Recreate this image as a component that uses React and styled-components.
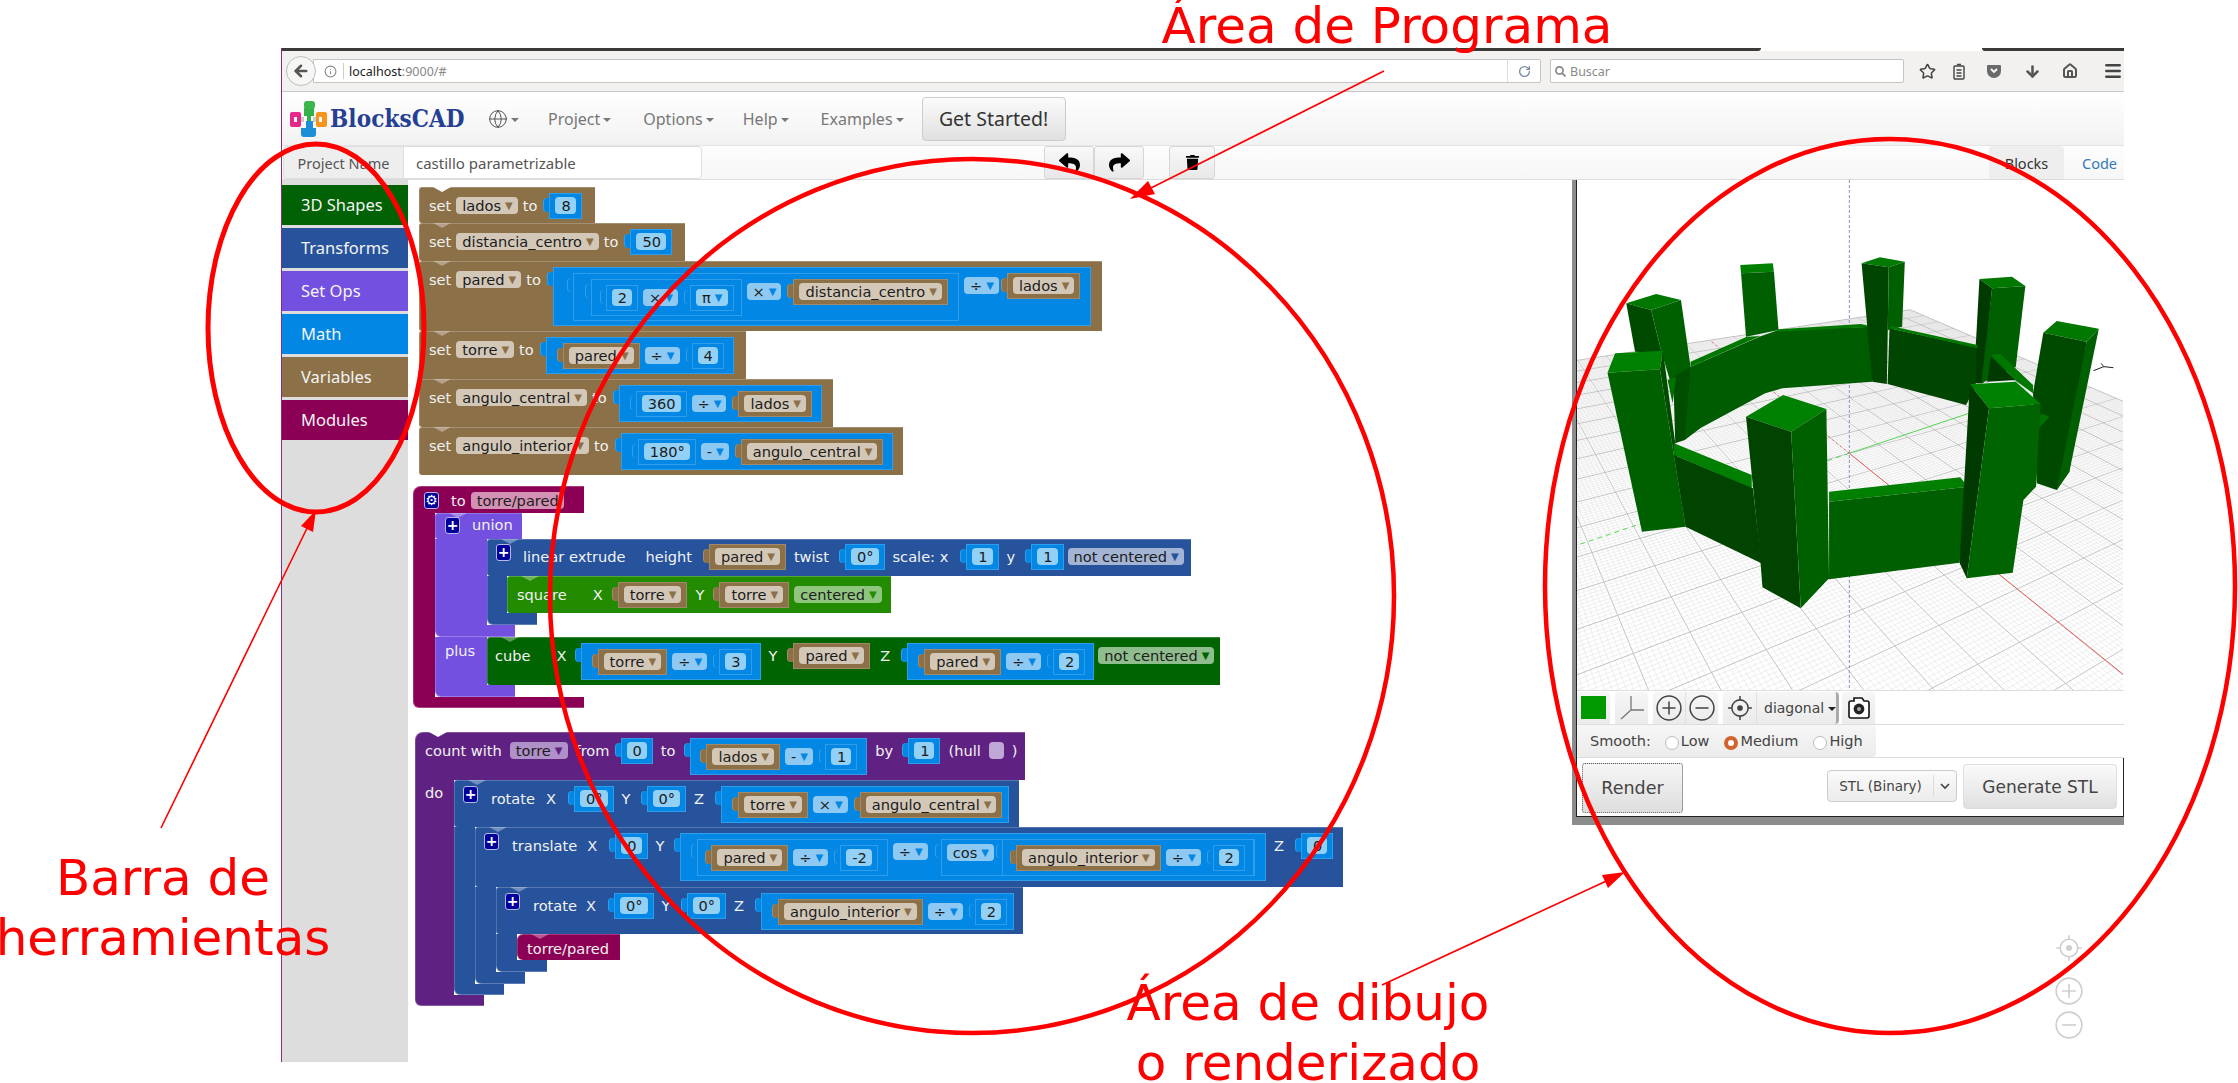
import React from "react";
import styled, { createGlobalStyle } from "styled-components";
import { FaReply, FaShare, FaTrash, FaSearch } from "react-icons/fa";
import { Globe, Star, ArrowDown, Home, Menu, RotateCw, Info, ArrowLeft } from "lucide-react";

const BROWN = "#8b7048";
const MATH = "#0288e4";
const BLUE = "#26539c";
const LILAC = "#7450e0";
const WINE = "#8b0054";
const PURPLE = "#602282";
const LIME = "#228b00";
const DARK_GREEN = "#006400";

const GlobalStyle = createGlobalStyle`
  html, body { margin: 0; padding: 0; background: #fff; }
  body { font-family: "Noto Sans", sans-serif; }
`;

const Page = styled.div`
  position: relative;
  width: 2238px;
  height: 1083px;
  overflow: hidden;
  background: #fff;
  padding: 48px 0 0 281px;
  box-sizing: border-box;
`;

const Win = styled.div`
  width: 1843px;
  height: 1014px;
  display: flex;
  flex-direction: column;
  border-left: 1px solid #8a2a80;
  box-sizing: border-box;
`;

const TitleBar = styled.div`
  display: flex;
  justify-content: space-between;
  height: 3px;
  flex: none;
`;

const TitleSeg = styled.div`
  width: ${(p) => p.$w}px;
  background: #3a3a38;
  border-radius: ${(p) => p.$r};
`;

const Chrome = styled.div`
  flex: none;
  height: 40px;
  background: #f2f1ef;
  border-bottom: 1px solid #c8c8c8;
  display: flex;
  align-items: center;
  box-sizing: content-box;
  position: relative;
  padding-left: 4px;
`;

const BackBtn = styled.div`
  width: 30px;
  height: 30px;
  border-radius: 50%;
  border: 1px solid #bdbdbd;
  background: #f6f6f5;
  display: flex;
  align-items: center;
  justify-content: center;
  box-sizing: border-box;
  flex: none;
  color: #555;
  z-index: 1;
`;

const UrlBar = styled.div`
  width: 1228px;
  height: 24px;
  margin-left: -3px;
  background: #fff;
  border: 1px solid #c4c4c4;
  border-radius: 0 2px 2px 0;
  box-sizing: border-box;
  display: flex;
  align-items: center;
  padding-left: 10px;
  font-size: 12.5px;
  color: #222;
  flex: none;
`;

const UrlDim = styled.span`
  color: #888;
`;

const UrlSep = styled.span`
  width: 1px;
  height: 16px;
  background: #ccc;
  margin: 0 5px 0 6px;
`;

const ReloadSlot = styled.div`
  margin-left: auto;
  height: 22px;
  width: 32px;
  border-left: 1px solid #ddd;
  display: flex;
  align-items: center;
  justify-content: center;
  color: #7a8aa0;
`;

const SearchBox = styled.div`
  width: 354px;
  height: 24px;
  margin-left: 9px;
  background: #fff;
  border: 1px solid #c4c4c4;
  border-radius: 2px;
  box-sizing: border-box;
  display: flex;
  align-items: center;
  gap: 4px;
  padding-left: 4px;
  font-size: 12.5px;
  color: #8a8a8a;
  flex: none;
`;

const ChromeIcons = styled.div`
  display: flex;
  align-items: center;
  margin-left: 8px;
  color: #444;
  gap: 0;
`;

const ChromeIcon = styled.div`
  width: ${(p) => p.$w || 38}px;
  display: flex;
  justify-content: center;
`;

const Nav = styled.div`
  flex: none;
  height: 53px;
  background: linear-gradient(#ffffff, #f2f2f2);
  border-bottom: 1px solid #e4e4e4;
  display: flex;
  align-items: center;
  padding-left: 8px;
`;

const Brand = styled.div`
  font-family: "DejaVu Serif", serif;
  font-weight: 700;
  font-stretch: condensed;
  font-size: 24px;
  letter-spacing: 0.1px;
  color: #243f94;
  margin-left: 3px;
  width: 158px;
`;

const NavItem = styled.div`
  font-size: 16px;
  color: #777;
  margin-left: ${(p) => p.$ml}px;
  display: flex;
  align-items: center;
  gap: 3px;
`;

const Caret = styled.span`
  width: 0;
  height: 0;
  border-left: 4px solid transparent;
  border-right: 4px solid transparent;
  border-top: 4px solid ${(p) => p.$c || "#777"};
  margin-top: 2px;
`;

const GetStarted = styled.div`
  margin-left: 18px;
  width: 144px;
  height: 44px;
  border: 1px solid #ccc;
  border-radius: 4px;
  background: linear-gradient(#fbfbfb, #e0e0e0);
  font-size: 19.5px;
  color: #333;
  display: flex;
  align-items: center;
  justify-content: center;
  box-sizing: border-box;
`;

const ProjectRow = styled.div`
  flex: none;
  height: 34px;
  background: linear-gradient(#fdfdfd, #f7f7f7);
  border-bottom: 1px solid #dcdcdc;
  display: flex;
  align-items: stretch;
  box-sizing: border-box;
  padding-left: 1px;
`;

const ProjectLabel = styled.div`
  width: 120px;
  background: #eeeeee;
  border: 1px solid #ddd;
  border-right: none;
  border-radius: 4px 0 0 4px;
  box-sizing: border-box;
  font-size: 14.5px;
  color: #555;
  display: flex;
  align-items: center;
  justify-content: center;
  white-space: nowrap;
`;

const ProjectInput = styled.div`
  width: 299px;
  background: #fff;
  border: 1px solid #ddd;
  border-radius: 0 4px 4px 0;
  box-sizing: border-box;
  font-size: 15px;
  color: #555;
  display: flex;
  align-items: center;
  padding-left: 12px;
`;

const ToolBtn = styled.div`
  width: ${(p) => p.$w || 50}px;
  margin-left: ${(p) => p.$ml || 0}px;
  background: linear-gradient(#f8f8f8, #e9e9e9);
  border: 1px solid #d6d6d6;
  border-radius: 3px;
  box-sizing: border-box;
  display: flex;
  align-items: center;
  justify-content: center;
  color: #000;
`;

const TabBlocks = styled.div`
  width: 75px;
  margin-left: 774px;
  background: #eee;
  border-radius: 4px 4px 0 0;
  font-size: 14.5px;
  color: #333;
  display: flex;
  align-items: center;
  justify-content: center;
`;

const TabCode = styled.div`
  margin-left: 18px;
  font-size: 14.5px;
  color: #337ab7;
  display: flex;
  align-items: center;
`;

const Main = styled.div`
  flex: 1;
  display: flex;
  min-height: 0;
`;

const Sidebar = styled.div`
  width: 126px;
  flex: none;
  background: #dddddd;
  padding-top: 5px;
  display: flex;
  flex-direction: column;
  gap: 3px;
`;

const ToolItem = styled.div`
  height: 40px;
  background: ${(p) => p.$c};
  color: #f4f4f4;
  font-size: 16.5px;
  display: flex;
  align-items: center;
  padding: 0 0 2px 19px;
  box-sizing: border-box;
`;

const Workspace = styled.div`
  width: 1164px;
  flex: none;
  background: #fff;
  padding: 7px 0 0 5px;
  box-sizing: border-box;
  font-family: "DejaVu Sans", sans-serif;
  font-size: 14.6px;
  display: flex;
  flex-direction: column;
  align-items: flex-start;
`;

const Stack = styled.div`
  display: flex;
  flex-direction: column;
  align-items: flex-start;
  margin-left: ${(p) => p.$ml || 0}px;
  margin-top: ${(p) => p.$mt || 0}px;
`;

/* one row of a block: the coloured strip with its fields */
const Block = styled.div`
  position: relative;
  width: ${(p) => p.$w}px;
  height: ${(p) => p.$h}px;
  background: ${(p) => p.$c};
  box-sizing: border-box;
  display: flex;
  align-items: flex-start;
  gap: ${(p) => p.$gap ?? 6}px;
  padding: ${(p) => p.$pt ?? 6}px 0 0 ${(p) => p.$pl ?? 10}px;
  border-radius: ${(p) => p.$r || "3px 0 0 3px"};
  box-shadow: inset 0 1px 0 rgba(255, 255, 255, 0.22), inset 1px 0 0 rgba(255, 255, 255, 0.18);
  white-space: nowrap;

  &::before {
    content: "";
    display: ${(p) => (p.$noNotch ? "none" : "block")};
    position: absolute;
    left: 14px;
    top: 0;
    width: 18px;
    height: 5px;
    background: ${(p) => p.$notch || "rgba(255,255,255,0.35)"};
    clip-path: polygon(0 0, 100% 0, 50% 100%);
  }
`;

const Foot = styled.div`
  width: ${(p) => p.$w}px;
  height: ${(p) => p.$h}px;
  background: ${(p) => p.$c};
  border-radius: 0 0 0 6px;
  box-shadow: inset 1px 0 0 rgba(255, 255, 255, 0.18), inset 0 -1px 0 rgba(255, 255, 255, 0.25);
`;

const Slot = styled.div`
  display: flex;
  align-items: stretch;
`;

const Band = styled.div`
  width: ${(p) => p.$w}px;
  flex: none;
  background: ${(p) => p.$c};
  box-shadow: inset 1px 0 0 rgba(255, 255, 255, 0.18);
  color: #f5f5f5;
  padding: ${(p) => p.$pad || 0};
  box-sizing: border-box;
`;

const SlotBody = styled.div`
  display: flex;
  flex-direction: column;
  align-items: flex-start;
`;

const Label = styled.span`
  color: #f2f2f2;
  line-height: 17px;
  margin-top: ${(p) => p.$mt ?? 4}px;
  margin-left: ${(p) => p.$ml || 0}px;
  white-space: pre;
`;

const Pill = styled.span`
  display: inline-flex;
  align-items: center;
  height: 17px;
  line-height: 17px;
  padding: 0 5px 0 6px;
  gap: 4px;
  border-radius: 4px;
  background: ${(p) => p.$c};
  color: #1c1c1c;
  margin-top: ${(p) => p.$mt ?? 4}px;
  margin-left: ${(p) => p.$ml || 0}px;
`;

const Tri = styled.span`
  font-size: 10px;
  color: ${(p) => p.$c};
`;

const Inset = styled.span`
  position: relative;
  display: inline-flex;
  align-items: flex-start;
  gap: ${(p) => p.$gap ?? 5}px;
  flex: none;
  background: ${(p) => p.$c};
  padding: ${(p) => p.$pad};
  margin-left: ${(p) => p.$ml ?? 7}px;
  box-shadow: inset 0 0 0 1px rgba(255, 255, 255, 0.18);

  &::before {
    content: "";
    position: absolute;
    left: -6px;
    top: 5px;
    width: 6px;
    height: 14px;
    border-radius: 4px 0 0 4px;
    background: ${(p) => p.$c};
    box-shadow: inset 1px 0 0 rgba(255, 255, 255, 0.2);
  }
`;

const Mutator = styled.span`
  width: 13px;
  height: 15px;
  flex: none;
  margin-top: ${(p) => p.$mt ?? 1}px;
  border-radius: 3px;
  background: #00009b;
  border: 1px solid #b8b8e8;
  color: #fff;
  font: 700 14px/14px "DejaVu Sans", sans-serif;
  text-align: center;
  box-sizing: content-box;
`;

const HullBox = styled.span`
  width: 15px;
  height: 17px;
  margin-top: 4px;
  border-radius: 4px;
  background: #bfa7d6;
`;

/* reporters ---------------------------------------------------------- */
const Num = ({ children, ml }) => (
  <Inset $c={MATH} $pad="4px 6px 5px 6px" $ml={ml}>
    <Pill $c="#93d0f6" $mt={0}>{children}</Pill>
  </Inset>
);

const PiNum = () => (
  <Inset $c={MATH} $pad="4px 6px 5px 6px">
    <Pill $c="#93d0f6" $mt={0}>π<Tri $c={MATH}>▼</Tri></Pill>
  </Inset>
);

const Var = ({ children, ml }) => (
  <Inset $c={BROWN} $pad="4px 6px 5px 6px" $ml={ml}>
    <Pill $c="#d3c8b8" $mt={0}>{children}<Tri $c={BROWN}>▼</Tri></Pill>
  </Inset>
);

const Op = ({ children }) => (
  <Pill $c="#8ec9f3">{children}<Tri $c={MATH}>▼</Tri></Pill>
);

const MathBox = ({ children, ml, pad = "6px 10px 5px 10px", gap }) => (
  <Inset $c={MATH} $pad={pad} $ml={ml} $gap={gap}>{children}</Inset>
);

const VarField = ({ children }) => (
  <Pill $c="#d3c8b8">{children}<Tri $c={BROWN}>▼</Tri></Pill>
);

const Choice = ({ c, tri, ml, children }) => (
  <Pill $c={c} $ml={ml}>{children}<Tri $c={tri}>▼</Tri></Pill>
);

const RenderCol = styled.div`
  flex: 1;
  display: flex;
  flex-direction: column;
  align-items: stretch;
  min-width: 0;
`;

const RenderPane = styled.div`
  height: 645px;
  flex: none;
  border-left: 4px solid #8c8c8c;
  border-bottom: 8px solid #8c8c8c;
  box-sizing: border-box;
  display: flex;
  flex-direction: column;
`;

const RenderInner = styled.div`
  flex: 1;
  border-left: 1px solid #222;
  border-bottom: 1px solid #222;
  display: flex;
  flex-direction: column;
  font-family: "DejaVu Sans", sans-serif;
  color: #444;
  min-height: 0;
`;

const CanvasWrap = styled.div`
  height: 510px;
  flex: none;
  overflow: hidden;
  background: #fff;
`;

const CtlRow = styled.div`
  height: 34px;
  flex: none;
  display: flex;
  align-items: center;
  gap: 5px;
  border-top: 1px solid #ddd;
  box-sizing: border-box;
`;

const CtlGroup = styled.div`
  height: 32px;
  width: ${(p) => p.$w}px;
  display: flex;
  align-items: center;
  background: linear-gradient(#f6f6f6, #ebebeb);
  border-radius: 4px;
  box-shadow: 0 1px 1px rgba(0, 0, 0, 0.15);
`;

const CtlCell = styled.div`
  flex: ${(p) => p.$grow || 1};
  height: 100%;
  display: flex;
  align-items: center;
  justify-content: center;
  border-right: 1px solid #dfdfdf;
  &:last-child { border-right: none; }
`;

const Swatch = styled.div`
  width: 25px;
  height: 23px;
  background: #009900;
`;

const ViewSelect = styled.div`
  height: 100%;
  flex: 1;
  display: flex;
  align-items: center;
  gap: 4px;
  padding-left: 7px;
  font-size: 14px;
  color: #444;
  border-right: 3px solid #aaa;
  border-radius: 0 4px 4px 0;
`;

const SmoothRow = styled.div`
  height: 34px;
  flex: none;
  border-top: 1px solid #ddd;
  border-bottom: 1px solid #ddd;
  box-sizing: border-box;
  display: flex;
`;

const SmoothPanel = styled.div`
  width: 299px;
  background: linear-gradient(#f6f6f6, #ececec);
  border-radius: 4px;
  display: flex;
  align-items: center;
  font-size: 14.5px;
  color: #444;
  padding-left: 13px;
  box-sizing: border-box;
`;

const RadioOpt = styled.label`
  display: flex;
  align-items: center;
  gap: 2px;
  margin-left: ${(p) => p.$ml}px;
`;

const Radio = styled.span`
  width: 14px;
  height: 14px;
  margin-top: 4px;
  border-radius: 50%;
  box-sizing: border-box;
  background: #fff;
  border: ${(p) => (p.$on ? "4px solid #d2622e" : "1px solid #bcbcbc")};
`;

const ActionRow = styled.div`
  flex: 1;
  display: flex;
  align-items: flex-start;
  padding: 5px 5px 0 5px;
  border-right: 1px solid #222;
`;

const RenderBtn = styled.div`
  width: 101px;
  height: 50px;
  background: linear-gradient(#f6f6f6, #dedede);
  border: 1px dotted #555;
  border-radius: 3px;
  box-sizing: border-box;
  display: flex;
  align-items: center;
  justify-content: center;
  font-size: 17.5px;
  color: #444;
`;

const FormatSelect = styled.div`
  width: 130px;
  height: 32px;
  margin: 7px 0 0 144px;
  background: linear-gradient(#fafafa, #ececec);
  border: 1px solid #ccc;
  border-radius: 4px;
  box-sizing: border-box;
  display: flex;
  align-items: center;
  font-size: 13.5px;
  color: #444;
`;

const FormatText = styled.span`
  flex: 1;
  text-align: center;
  border-right: 1px solid #ddd;
  white-space: nowrap;
  line-height: 22px;
`;

const FormatArrow = styled.span`
  width: 22px;
  display: flex;
  justify-content: center;
`;

const GenerateBtn = styled.div`
  width: 154px;
  height: 45px;
  margin: 1px 0 0 6px;
  background: linear-gradient(#fafafa, #e0e0e0);
  border: 1px solid #ddd;
  border-radius: 4px;
  box-sizing: border-box;
  display: flex;
  align-items: center;
  justify-content: center;
  font-size: 17px;
  color: #444;
`;

const ViewDots = styled.div`
  padding: 109px 41px 0 0;
  display: flex;
  flex-direction: column;
  align-items: flex-end;
  color: #cfcfcf;
`;

const ViewDot = styled.div`
  height: 28px;
  margin-top: ${(p) => p.$mt || 0}px;
`;

const Note = styled.div`
  position: absolute;
  left: ${(p) => p.$x}px;
  top: ${(p) => p.$y}px;
  transform: translateX(-50%);
  font-family: "DejaVu Sans", sans-serif;
  font-size: 50px;
  line-height: 60px;
  color: #ff0000;
  white-space: nowrap;
  text-align: center;
`;

const Marks = styled.svg`
  position: absolute;
  left: 0;
  top: 0;
  pointer-events: none;
`;

const CircleIcon = ({ sign, size = 24 }) => (
  <svg width={size} height={size} viewBox="0 0 24 24" fill="none" stroke="currentColor" strokeWidth="1.4">
    <circle cx="12" cy="12" r="11" />
    <path d={sign === "+" ? "M6 12h12M12 6v12" : "M6 12h12"} />
  </svg>
);

const TargetIcon = ({ size = 24 }) => (
  <svg width={size} height={size} viewBox="0 0 24 24" fill="none" stroke="currentColor" strokeWidth="1.4">
    <circle cx="12" cy="12" r="7.5" />
    <circle cx="12" cy="12" r="2.6" fill="currentColor" stroke="none" />
    <path d="M12 1v3.5M12 19.5V23M1 12h3.5M19.5 12H23" />
  </svg>
);

const AxisIcon = () => (
  <svg width="26" height="26" viewBox="0 0 26 26" fill="none" stroke="#777" strokeWidth="1.3">
    <path d="M12 1v14L2 24M12 15h13" />
  </svg>
);

const CameraIcon = () => (
  <svg width="22" height="24" viewBox="0 0 22 24">
    <path d="M3 5h3V2h8l2 3h3a2 2 0 0 1 2 2v13a2 2 0 0 1-2 2H3a2 2 0 0 1-2-2V7a2 2 0 0 1 2-2z" fill="#fff" stroke="#111" strokeWidth="1.6" />
    <circle cx="11" cy="13" r="5.4" fill="#222" />
    <circle cx="11" cy="13" r="2" fill="#aaa" />
  </svg>
);

const Logo = () => (
  <svg width="37" height="36" viewBox="0 0 37 36">
    <path d="M14 7h10v8h-3v6h-4v-6h-3z" fill="#33b24a" />
    <rect x="14" y="0" width="11" height="8" rx="3" fill="#39b54a" />
    <rect x="0" y="11" width="11" height="15" rx="2" fill="#e8268a" />
    <rect x="4" y="16" width="3" height="5" fill="#fff" />
    <rect x="26" y="11" width="11" height="15" rx="2" fill="#f7941d" />
    <rect x="29" y="16" width="3" height="5" fill="#fff" />
    <path d="M11 16h3v5h-3zM23 16h3v5h-3z" fill="#ccc" />
    <path d="M16 20h7v7h3v6a3 3 0 0 1-3 3h-9a3 3 0 0 1-3-3v-6h5z" fill="#1d8fd6" />
  </svg>
);

const PocketIcon = () => (
  <svg width="16" height="16" viewBox="0 0 16 16">
    <path d="M2 2h12a1 1 0 0 1 1 1v5a7 7 0 0 1-14 0V3a1 1 0 0 1 1-1z" fill="#6a6a6a" />
    <path d="M5 6l3 3 3-3" fill="none" stroke="#fff" strokeWidth="1.8" />
  </svg>
);

const ListIcon = () => (
  <svg width="14" height="17" viewBox="0 0 14 17" fill="none" stroke="#444" strokeWidth="1.4">
    <rect x="2" y="3" width="10" height="13" rx="1" />
    <path d="M5 1.5h4M4.5 7h5M4.5 10h5M4.5 13h5" />
  </svg>
);

/* ground grid: straight lines between the two vanishing points read off the view */
const O = [730, 670];
const VR = [-438, -416];
const VG = [3632, -240];
const project = (u, v) => {
  const w = 1 + 0.4545 * u + 0.2778 * v;
  return [
    (O[0] + 0.4545 * VR[0] * u + 0.2778 * VG[0] * v) / w,
    (O[1] + 0.4545 * VR[1] * u + 0.2778 * VG[1] * v) / w,
  ];
};

const gridLines = [];
for (let i = -100; i <= 100; i++) {
  const t = i / 100;
  const major = i % 10 === 0;
  const [a, b] = [project(t, -1), project(t, 1)];
  const [c, d] = [project(-1, t), project(1, t)];
  gridLines.push({ k: `u${i}`, a, b, major });
  gridLines.push({ k: `v${i}`, a: c, b: d, major });
}

const FACES = [
  // rear posts
  ["147,220 225,192 290,210 212,240", "#007800"],
  ["147,220 212,240 240,370 170,365", "#004a00"],
  ["212,240 290,210 315,410 300,600 240,370", "#006000"],
  ["445,105 530,100 533,125 447,130", "#007f00"],
  ["447,130 533,125 545,300 460,320", "#005f00"],
  ["762,100 810,82 875,95 833,112", "#007a00"],
  ["1070,147 1155,140 1190,168 1103,175", "#007800"],
  ["1070,147 1103,175 1080,460 1055,460", "#003a00"],
  ["1103,175 1190,168 1165,410 1075,460", "#005f00"],
  ["1237,308 1272,273 1382,296 1350,335", "#007800"],
  ["1237,308 1350,335 1305,725 1272,780 1220,760 1210,490", "#004a00"],
  ["1350,335 1382,296 1305,725 1272,780", "#005f00"],
  // rear walls
  ["270,440 315,410 340,595 300,630 275,640", "#004d00"],
  ["315,410 500,318 545,300 790,290 790,455 555,475 510,490 340,595 300,625", "#005c00"],
  ["315,410 498,318 462,320 315,395", "#007800"],
  ["545,298 760,282 792,290 545,305", "#007800"],
  ["762,100 833,112 828,462 790,455", "#004500"],
  ["833,112 875,95 868,290 830,300 828,462", "#005f00"],
  ["835,295 1062,352 1060,470 1035,525 830,462", "#004500"],
  ["838,288 1065,345 1065,355 835,295", "#007800"],
  ["1090,455 1100,380 1165,450", "#003a00"],
  ["1100,375 1125,372 1210,465 1210,490 1165,452", "#007800"],
  ["255,450 278,440 268,520", "#007000"],
  // front left
  ["98,428 118,370 243,362 235,418", "#008000"],
  ["98,428 235,418 302,890 188,905", "#006000"],
  ["235,418 243,362 275,640 302,890", "#004d00"],
  ["272,640 475,735 475,775 272,675", "#007f00"],
  ["272,675 478,775 500,1000 302,890", "#004400"],
  // front right wall
  ["677,785 1020,742 1040,770 677,815", "#007f00"],
  ["677,815 1040,770 1018,998 677,1048", "#005f00"],
  // front centre post
  ["460,560 557,495 670,537 578,605", "#008000"],
  ["460,560 578,605 603,1135 503,1072 498,1000", "#004400"],
  ["578,605 670,537 677,1045 603,1135", "#006000"],
  // front right post
  ["1230,550 1253,560 1220,600", "#007000"],
  ["1045,463 1165,455 1230,522 1095,535", "#008000"],
  ["1045,463 1095,535 1037,1045 1018,998", "#003a00"],
  ["1095,535 1230,522 1218,770 1185,810 1157,1028 1037,1045", "#006400"],
];

const SceneLine = styled.line`
  vector-effect: non-scaling-stroke;
`;

const Castle = () => (
  <svg width="546" height="510" style={{ display: "block" }}>
    <g transform="translate(-7 50) scale(0.38265 0.33333)">
      {gridLines.map((l) => (
        <SceneLine key={l.k} x1={l.a[0]} y1={l.a[1]} x2={l.b[0]} y2={l.b[1]} stroke={l.major ? "#bcbcbc" : "#dedede"} strokeWidth={l.major ? 0.9 : 0.5} />
      ))}
      <SceneLine x1="730" y1="-150" x2="730" y2="1380" stroke="#8f8fc4" strokeWidth="1" strokeDasharray="3 2" />
      <SceneLine x1="730" y1="670" x2="1040" y2="551" stroke="#55d455" strokeWidth="1" />
      <SceneLine x1="730" y1="670" x2="20" y2="945" stroke="#55d455" strokeWidth="1" strokeDasharray="5 4" />
      <SceneLine x1="730" y1="670" x2="1480" y2="1365" stroke="#f06060" strokeWidth="1" />
      <SceneLine x1="730" y1="670" x2="370" y2="335" stroke="#f06060" strokeWidth="1" strokeDasharray="2 3" />
      {FACES.map(([pts, fill], i) => (
        <polygon key={i} points={pts} fill={fill} />
      ))}
      <SceneLine x1="1368" y1="422" x2="1395" y2="410" stroke="#222" strokeWidth="1" />
      <SceneLine x1="1395" y1="410" x2="1420" y2="413" stroke="#222" strokeWidth="1" />
      <SceneLine x1="1395" y1="410" x2="1388" y2="400" stroke="#222" strokeWidth="1" />
    </g>
  </svg>
);

const SetBlock = ({ w, h, name, notch, children }) => (
  <Block $c={BROWN} $w={w} $h={h} $notch={notch} $gap={5}>
    <Label>set</Label>
    <VarField>{name}</VarField>
    <Label>to</Label>
    {children}
  </Block>
);

export default function App() {
  return (
    <Page>
      <GlobalStyle />
      <Win>
        <TitleBar>
          <TitleSeg $w={1479} $r="0 0 6px 0" />
          <TitleSeg $w={142} $r="0 0 0 6px" />
        </TitleBar>
        <Chrome>
          <BackBtn><ArrowLeft size={18} strokeWidth={3.4} /></BackBtn>
          <UrlBar>
            <Info size={13} color="#888" />
            <UrlSep />
            localhost<UrlDim>:9000/#</UrlDim>
            <ReloadSlot><RotateCw size={13} strokeWidth={2.4} /></ReloadSlot>
          </UrlBar>
          <SearchBox><FaSearch size={11} />Buscar</SearchBox>
          <ChromeIcons>
            <ChromeIcon $w={30}><Star size={17} strokeWidth={2.2} /></ChromeIcon>
            <ChromeIcon $w={33}><ListIcon /></ChromeIcon>
            <ChromeIcon><PocketIcon /></ChromeIcon>
            <ChromeIcon><ArrowDown size={17} strokeWidth={3.6} color="#555" /></ChromeIcon>
            <ChromeIcon><Home size={16} strokeWidth={3} color="#555" /></ChromeIcon>
            <ChromeIcon $w={48}><Menu size={20} strokeWidth={3} /></ChromeIcon>
          </ChromeIcons>
        </Chrome>
        <Nav>
          <Logo />
          <Brand>BlocksCAD</Brand>
          <NavItem $ml={0}><Globe size={20} strokeWidth={1.2} color="#555" /><Caret /></NavItem>
          <NavItem $ml={29}>Project<Caret /></NavItem>
          <NavItem $ml={32}>Options<Caret /></NavItem>
          <NavItem $ml={29}>Help<Caret /></NavItem>
          <NavItem $ml={32}>Examples<Caret /></NavItem>
          <GetStarted>Get Started!</GetStarted>
        </Nav>
        <ProjectRow>
          <ProjectLabel>Project Name</ProjectLabel>
          <ProjectInput>castillo parametrizable</ProjectInput>
          <ToolBtn $ml={342}><FaReply size={21} /></ToolBtn>
          <ToolBtn><FaShare size={21} /></ToolBtn>
          <ToolBtn $ml={25} $w={46}><FaTrash size={15} /></ToolBtn>
          <TabBlocks>Blocks</TabBlocks>
          <TabCode>Code</TabCode>
        </ProjectRow>
        <Main>
          <Sidebar>
            <ToolItem $c="#006205">3D Shapes</ToolItem>
            <ToolItem $c={BLUE}>Transforms</ToolItem>
            <ToolItem $c={LILAC}>Set Ops</ToolItem>
            <ToolItem $c={MATH}>Math</ToolItem>
            <ToolItem $c={BROWN}>Variables</ToolItem>
            <ToolItem $c={WINE}>Modules</ToolItem>
          </Sidebar>
          <Workspace>
            <Stack $ml={6}>
              <SetBlock w={176} h={36} name="lados" notch="#fff">
                <Num>8</Num>
              </SetBlock>
              <SetBlock w={266} h={38} name="distancia_centro">
                <Num>50</Num>
              </SetBlock>
              <SetBlock w={683} h={70} name="pared">
                <MathBox pad="6px 11px 5px 13px">
                  <MathBox pad="6px 11px 5px 11px">
                    <MathBox pad="6px 8px 5px 8px">
                      <Num>2</Num>
                      <Op>×</Op>
                      <PiNum />
                    </MathBox>
                    <Op>×</Op>
                    <Var>distancia_centro</Var>
                  </MathBox>
                  <Op>÷</Op>
                  <Var ml={3}>lados</Var>
                </MathBox>
              </SetBlock>
              <SetBlock w={327} h={48} name="torre">
                <MathBox>
                  <Var>pared</Var>
                  <Op>÷</Op>
                  <Num>4</Num>
                </MathBox>
              </SetBlock>
              <SetBlock w={414} h={48} name="angulo_central">
                <MathBox>
                  <Num>360</Num>
                  <Op>÷</Op>
                  <Var>lados</Var>
                </MathBox>
              </SetBlock>
              <SetBlock w={484} h={48} name="angulo_interior">
                <MathBox>
                  <Num>180°</Num>
                  <Op>-</Op>
                  <Var>angulo_central</Var>
                </MathBox>
              </SetBlock>
            </Stack>

            <Stack $mt={11}>
              <Block $c={WINE} $w={171} $h={27} $noNotch $pl={11} $gap={7} $r="8px 0 0 0">
                <Mutator $mt={0}>⚙</Mutator>
                <Label $mt={0} $ml={5}>to</Label>
                <Pill $c="#d291b5" $mt={0} $ml={-2}>torre/pared</Pill>
              </Block>
              <Slot>
                <Band $w={22} $c={WINE} />
                <SlotBody>
                  <Block $c={LILAC} $w={87} $h={26} $pl={10} $pt={3} $gap={7}>
                    <Mutator $mt={1}>+</Mutator>
                    <Label $mt={0} $ml={5}>union</Label>
                  </Block>
                  <Slot>
                    <Band $w={52} $c={LILAC} />
                    <SlotBody>
                      <Block $c={BLUE} $w={704} $h={37} $pl={9} $pt={5} $gap={8}>
                        <Mutator $mt={0}>+</Mutator>
                        <Label $ml={4}>linear extrude</Label>
                        <Label $ml={12}>height</Label>
                        <Var ml={9}>pared</Var>
                        <Label>twist</Label>
                        <Num ml={8}>0°</Num>
                        <Label>scale: x</Label>
                        <Num ml={10}>1</Num>
                        <Label>y</Label>
                        <Num ml={8}>1</Num>
                        <Choice c="#a3b4d4" tri={BLUE} ml={-4}>not centered</Choice>
                      </Block>
                      <Slot>
                        <Band $w={20} $c={BLUE} />
                        <Block $c={LIME} $w={384} $h={37} $pl={10} $gap={8}>
                          <Label>square</Label>
                          <Label $ml={18}>X</Label>
                          <Var>torre</Var>
                          <Label>Y</Label>
                          <Var>torre</Var>
                          <Choice c="#90c580" tri={LIME} ml={-3}>centered</Choice>
                        </Block>
                      </Slot>
                      <Foot $c={BLUE} $w={50} $h={12} />
                    </SlotBody>
                  </Slot>
                  <Foot $c={LILAC} $w={80} $h={12} />
                  <Slot>
                    <Band $w={52} $c={LILAC} $pad="5px 0 0 10px"><Label $mt={0}>plus</Label></Band>
                    <Block $c={DARK_GREEN} $w={733} $h={48} $pl={8} $gap={7}>
                      <Label>cube</Label>
                      <Label $ml={19}>X</Label>
                      <MathBox pad="6px 9px 5px 10px">
                        <Var>torre</Var>
                        <Op>÷</Op>
                        <Num>3</Num>
                      </MathBox>
                      <Label $ml={1}>Y</Label>
                      <Var ml={9}>pared</Var>
                      <Label $ml={3}>Z</Label>
                      <MathBox ml={10} pad="6px 9px 5px 10px">
                        <Var>pared</Var>
                        <Op>÷</Op>
                        <Num>2</Num>
                      </MathBox>
                      <Choice c="#90bd8e" tri={DARK_GREEN} ml={-3}>not centered</Choice>
                    </Block>
                  </Slot>
                  <Foot $c={LILAC} $w={80} $h={12} />
                </SlotBody>
              </Slot>
              <Foot $c={WINE} $w={171} $h={11} />
            </Stack>

            <Stack $mt={24} $ml={2}>
              <Block $c={PURPLE} $w={610} $h={48} $pl={10} $gap={8} $notch="#fff" $r="8px 0 0 0">
                <Label>count with</Label>
                <Pill $c="#b090c8">torre<Tri $c={PURPLE}>▼</Tri></Pill>
                <Label>from</Label>
                <Num ml={3}>0</Num>
                <Label>to</Label>
                <MathBox pad="6px 10px 5px 9px">
                  <Var>lados</Var>
                  <Op>-</Op>
                  <Num>1</Num>
                </MathBox>
                <Label>by</Label>
                <Num>1</Num>
                <Label>(hull</Label>
                <HullBox />
                <Label>)</Label>
              </Block>
              <Slot>
                <Band $w={39} $c={PURPLE} $pad="4px 0 0 10px"><Label $mt={0}>do</Label></Band>
                <SlotBody>
                  <Block $c={BLUE} $w={565} $h={47} $pl={9} $gap={8}>
                    <Mutator $mt={0}>+</Mutator>
                    <Label $ml={5}>rotate</Label>
                    <Label $ml={3}>X</Label>
                    <Num ml={10}>0°</Num>
                    <Label>Y</Label>
                    <Num ml={8}>0°</Num>
                    <Label>Z</Label>
                    <MathBox ml={9} pad="6px 7px 5px 10px">
                      <Var>torre</Var>
                      <Op>×</Op>
                      <Var>angulo_central</Var>
                    </MathBox>
                  </Block>
                  <Slot>
                    <Band $w={21} $c={BLUE} />
                    <SlotBody>
                      <Block $c={BLUE} $w={868} $h={60} $pl={9} $gap={8}>
                        <Mutator $mt={0}>+</Mutator>
                        <Label $ml={5}>translate</Label>
                        <Label $ml={2}>X</Label>
                        <Num ml={10}>0</Num>
                        <Label>Y</Label>
                        <MathBox ml={8} pad="6px 11px 5px 10px">
                          <MathBox pad="6px 10px 5px 7px">
                            <Var>pared</Var>
                            <Op>÷</Op>
                            <Num>-2</Num>
                          </MathBox>
                          <Op>÷</Op>
                          <MathBox pad="0 1px 0 6px" ml={8}>
                            <Pill $c="#8ec9f3" $mt={5}>cos<Tri $c={MATH}>▼</Tri></Pill>
                            <MathBox ml={3} pad="6px 9px 5px 7px">
                              <Var>angulo_interior</Var>
                              <Op>÷</Op>
                              <Num>2</Num>
                            </MathBox>
                          </MathBox>
                        </MathBox>
                        <Label>Z</Label>
                        <Num ml={9}>0</Num>
                      </Block>
                      <Slot>
                        <Band $w={21} $c={BLUE} />
                        <SlotBody>
                          <Block $c={BLUE} $w={527} $h={47} $pl={9} $gap={8}>
                            <Mutator $mt={0}>+</Mutator>
                            <Label $ml={5}>rotate</Label>
                            <Label $ml={1}>X</Label>
                            <Num ml={10}>0°</Num>
                            <Label>Y</Label>
                            <Num ml={8}>0°</Num>
                            <Label>Z</Label>
                            <MathBox ml={9} pad="6px 7px 5px 10px">
                              <Var>angulo_interior</Var>
                              <Op>÷</Op>
                              <Num>2</Num>
                            </MathBox>
                          </Block>
                          <Slot>
                            <Band $w={21} $c={BLUE} />
                            <Block $c={WINE} $w={103} $h={26} $pl={10} $r="6px 0 0 6px">
                              <Label $mt={0}>torre/pared</Label>
                            </Block>
                          </Slot>
                          <Foot $c={BLUE} $w={51} $h={12} />
                        </SlotBody>
                      </Slot>
                      <Foot $c={BLUE} $w={50} $h={12} />
                    </SlotBody>
                  </Slot>
                  <Foot $c={BLUE} $w={50} $h={11} />
                </SlotBody>
              </Slot>
              <Foot $c={PURPLE} $w={69} $h={11} />
            </Stack>
          </Workspace>
          <RenderCol>
            <RenderPane>
              <RenderInner>
                <CanvasWrap><Castle /></CanvasWrap>
                <CtlRow>
                  <CtlGroup $w={33}><CtlCell><Swatch /></CtlCell></CtlGroup>
                  <CtlGroup $w={33}><CtlCell><AxisIcon /></CtlCell></CtlGroup>
                  <CtlGroup $w={65}>
                    <CtlCell><CircleIcon sign="+" size={26} /></CtlCell>
                    <CtlCell><CircleIcon sign="-" size={26} /></CtlCell>
                  </CtlGroup>
                  <CtlGroup $w={114}>
                    <CtlCell $grow="0 0 33px"><TargetIcon size={26} /></CtlCell>
                    <ViewSelect>diagonal<Caret $c="#222" /></ViewSelect>
                  </CtlGroup>
                  <CtlGroup $w={33}><CtlCell><CameraIcon /></CtlCell></CtlGroup>
                </CtlRow>
                <SmoothRow>
                  <SmoothPanel>
                    Smooth:
                    <RadioOpt $ml={14}><Radio />Low</RadioOpt>
                    <RadioOpt $ml={15}><Radio $on />Medium</RadioOpt>
                    <RadioOpt $ml={15}><Radio />High</RadioOpt>
                  </SmoothPanel>
                </SmoothRow>
                <ActionRow>
                  <RenderBtn>Render</RenderBtn>
                  <FormatSelect>
                    <FormatText>STL (Binary)</FormatText>
                    <FormatArrow>
                      <svg width="10" height="7" viewBox="0 0 10 7" fill="none" stroke="#444" strokeWidth="1.6"><path d="M1 1l4 4 4-4" /></svg>
                    </FormatArrow>
                  </FormatSelect>
                  <GenerateBtn>Generate STL</GenerateBtn>
                </ActionRow>
              </RenderInner>
            </RenderPane>
            <ViewDots>
              <ViewDot><TargetIcon size={28} /></ViewDot>
              <ViewDot $mt={15}><CircleIcon sign="+" size={28} /></ViewDot>
              <ViewDot $mt={6}><CircleIcon sign="-" size={28} /></ViewDot>
            </ViewDots>
          </RenderCol>
        </Main>
      </Win>

      <Marks width="2238" height="1083" viewBox="0 0 2238 1083">
        <g fill="none" stroke="#ff0000">
          <ellipse cx="316" cy="328" rx="108" ry="184" strokeWidth="5" />
          <ellipse cx="972" cy="596" rx="422" ry="437" strokeWidth="4.5" />
          <ellipse cx="1890" cy="586" rx="345" ry="447" strokeWidth="4.5" />
          <path d="M161 828L311 520M1384 71L1145 191M1382 985L1615 877" strokeWidth="1.6" />
        </g>
        <g fill="#ff0000">
          <polygon points="316,510 313,532 301,526" />
          <polygon points="1130,199 1148,181 1155,194" />
          <polygon points="1625,872 1608,888 1602,875" />
        </g>
      </Marks>
      <Note $x={1387} $y={-4}>Área de Programa</Note>
      <Note $x={163} $y={848}>Barra de<br />herramientas</Note>
      <Note $x={1308} $y={973}>Área de dibujo<br />o renderizado</Note>
    </Page>
  );
}
